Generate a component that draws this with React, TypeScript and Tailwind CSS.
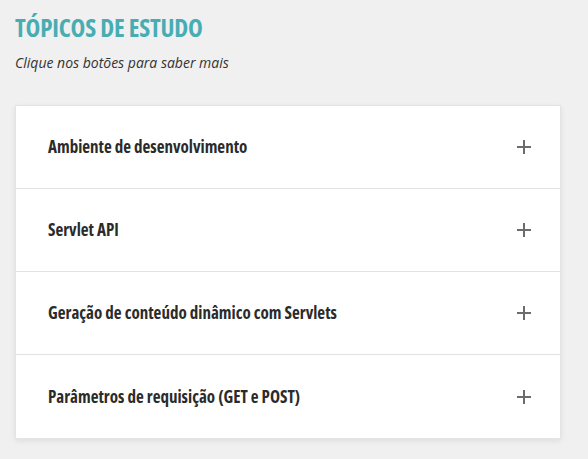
const topics = [
  "Ambiente de desenvolvimento",
  "Servlet API",
  "Geração de conteúdo dinâmico com Servlets",
  "Parâmetros de requisição (GET e POST)",
];

function PlusIcon() {
  return (
    <svg width="14" height="14" viewBox="0 0 14 14" className="text-[#6a6c6e]">
      <path d="M7 0v14M0 7h14" stroke="currentColor" strokeWidth="2" />
    </svg>
  );
}

function TopicRow({ title, last }: { title: string; last: boolean }) {
  return (
    <button
      className={`flex h-[83px] w-full items-center justify-between pl-[32px] pr-[29px] text-left ${
        last ? "" : "border-b border-[#e2e2e2]"
      }`}
    >
      <span className="text-[17px] font-bold text-[#2b2b2b] [font-stretch:75%]">
        {title}
      </span>
      <PlusIcon />
    </button>
  );
}

export default function App() {
  return (
    <div className="min-h-[459px] bg-[#f0f0f0] px-[15px] pt-[9px] font-['Open_Sans',sans-serif]">
      <h1 className="text-[25px] font-bold leading-[36px] tracking-[-0.2px] text-[#47adb3] [font-stretch:75%]">
        TÓPICOS DE ESTUDO
      </h1>
      <p className="mt-[8px] text-[14px] italic leading-[20px] text-[#333]">
        Clique nos botões para saber mais
      </p>
      <div className="mt-[32px] w-[546px] border border-[#e4e4e4] bg-white shadow-[0_2px_6px_rgba(0,0,0,0.08)]">
        {topics.map((t, i) => (
          <TopicRow key={t} title={t} last={i === topics.length - 1} />
        ))}
      </div>
    </div>
  );
}
